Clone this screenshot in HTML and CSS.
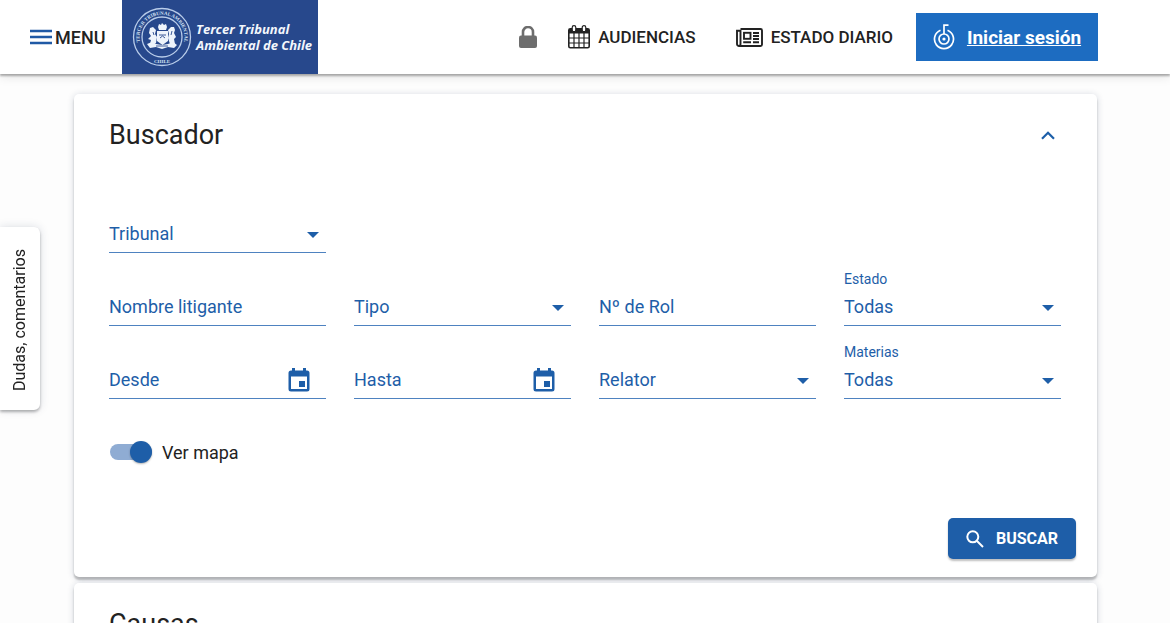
FILE: index.html
```html
<!DOCTYPE html>
<html lang="es">
<head>
<meta charset="utf-8">
<meta name="viewport" content="width=device-width, initial-scale=1">
<title>Tercer Tribunal Ambiental de Chile</title>
<link rel="stylesheet" href="styles.css">
</head>
<body>
<header class="topbar">
  <button class="menu" type="button">
    <svg width="22" height="16" viewBox="0 0 22 16" aria-hidden="true"><path d="M0 2h22M0 8h22M0 14h22" stroke="#2059a5" stroke-width="2.4"/></svg>
    MENU
  </button>
  <a class="brand" href="#">
    <svg class="seal" width="60" height="60" viewBox="0 0 60 60" aria-hidden="true">
      <defs>
        <path id="arcTop" d="M8 35A22.5 22.5 0 1 1 52 35"/>
      </defs>
      <g fill="none" stroke="#b9cdea">
        <circle cx="30" cy="30" r="28.5" stroke-width="1.3"/>
        <circle cx="30" cy="30" r="20" stroke-width="1.3"/>
      </g>
      <text class="seal-text"><textPath href="#arcTop" startOffset="50%" text-anchor="middle">TERCER TRIBUNAL AMBIENTAL</textPath></text>
      <text class="seal-text" x="30" y="56" text-anchor="middle">CHILE</text>
      <g fill="#eef4fb">
        <path d="M26 20l1-3 2 1 1-2 2 2 2-1 1 3-1 3h-7z"/>
        <path d="M25 24h11v10l-5.500 4-5.500-4z"/>
        <path d="M18 21l3-1 3 3-1 4 2 3-1 6-3 2-3-1 1-4-3-1 3-3-2-3z"/>
        <path d="M42 20l-3 0-3 3 1 4-1 4 2 6h5l-1-5 2-2-2-4 1-3z"/>
        <path d="M15 37l5-2 4 2 6 1 6-1 5-2 4 3-3 3-6-1-6 2-6-2-6 1z"/>
      </g>
      <path d="M27 28h7M28 31l2.500-2 2.500 2M21 25l1 3M40 24l-1 4M24 39l12 0" stroke="#27488c" stroke-width=".9" fill="none"/>
    </svg>
    <span class="brand-name">Tercer Tribunal<br>Ambiental de Chile</span>
  </a>
  <nav class="nav">
    <svg class="lock" width="18" height="22" viewBox="0 0 18 22" role="img" aria-label="Bloqueado"><path d="M4 10V6a5 5 0 0 1 10 0v4" fill="none" stroke="#6d6d6d" stroke-width="2.600"/><rect y="9.500" width="18" height="12.500" rx="2" fill="#6d6d6d"/></svg>
    <a class="nav-link" href="#">
      <svg width="22" height="24" viewBox="0 0 22 24" aria-hidden="true">
        <rect x=".8" y="3.800" width="20.400" height="19" rx="1.500" fill="#fff" stroke="#222" stroke-width="1.600"/>
        <path d="M1 4h20v4.500H1z" fill="#222"/>
        <path d="M1 13h20M1 18h20M6 8v15M11 8v15M16 8v15" stroke="#222" stroke-width="1.200"/>
        <rect x="4.200" y=".7" width="3.600" height="6" rx="1.800" fill="#fff" stroke="#222" stroke-width="1.200"/>
        <rect x="14.200" y=".7" width="3.600" height="6" rx="1.800" fill="#fff" stroke="#222" stroke-width="1.200"/>
      </svg>
      AUDIENCIAS
    </a>
    <a class="nav-link" href="#">
      <svg width="27" height="19" viewBox="0 0 27 19" aria-hidden="true">
        <g fill="none" stroke="#222" stroke-width="1.900">
          <path d="M4.500 1H24.500a1.500 1.500 0 0 1 1.500 1.500V16.500a1.500 1.500 0 0 1-1.500 1.500H3a2 2 0 0 1-2-2V2.800H4.500V16a1.800 1.800 0 0 1-1.800 1.900"/>
          <rect x="8" y="4.800" width="6.500" height="6"/>
          <path d="M17 5h6M17 8h6M17 11h6M7.200 14.200h7.800M17 14.200h6"/>
        </g>
      </svg>
      ESTADO DIARIO
    </a>
    <a class="login" href="#">
      <svg width="22" height="26" viewBox="0 0 22 26" aria-hidden="true">
        <g fill="none" stroke="#fff" stroke-width="1.700">
          <path d="M7.500 6.300A9.500 9.500 0 1 0 14.500 6.300"/>
          <circle cx="11" cy="15" r="5"/>
          <path d="M11 10V1.200H15.500"/>
        </g>
        <circle cx="11" cy="15" r="1.600" fill="#fff"/>
      </svg>
      <span>Iniciar sesión</span>
    </a>
  </nav>
</header>

<button class="feedback" type="button">Dudas, comentarios</button>

<main class="content">
  <section class="card">
    <div class="card-head">
      <h2>Buscador</h2>
      <button class="collapse" type="button" aria-label="Contraer">
        <svg width="14" height="9" viewBox="0 0 14 9"><path d="M1 7.700L7 1.700l6 6" fill="none" stroke="#1d5fa9" stroke-width="2.200"/></svg>
      </button>
    </div>
    <form class="search">
      <div class="fields">
        <div class="field first">
          <label for="tribunal">Tribunal</label>
          <select id="tribunal"><option></option></select>
          <svg class="arrow" viewBox="0 0 12 6"><path d="M0 0h12L6 6z"/></svg>
        </div>
        <div class="field">
          <label for="litigante">Nombre litigante</label>
          <input id="litigante" type="text">
        </div>
        <div class="field">
          <label for="tipo">Tipo</label>
          <select id="tipo"><option></option></select>
          <svg class="arrow" viewBox="0 0 12 6"><path d="M0 0h12L6 6z"/></svg>
        </div>
        <div class="field">
          <label for="rol">Nº de Rol</label>
          <input id="rol" type="text">
        </div>
        <div class="field filled">
          <label for="estado">Estado</label>
          <select id="estado"><option>Todas</option></select>
          <svg class="arrow" viewBox="0 0 12 6"><path d="M0 0h12L6 6z"/></svg>
        </div>
        <div class="field">
          <label for="desde">Desde</label>
          <input id="desde" type="text">
          <button class="date" type="button" aria-label="Elegir fecha desde">
            <svg width="22" height="24" viewBox="0 0 22 24"><path d="M19 2.500h-1V0h-3v2.500H7V0H4v2.500H3A2.500 2.500 0 0 0 .5 5v16A2.500 2.500 0 0 0 3 23.500h16a2.500 2.500 0 0 0 2.500-2.500V5A2.500 2.500 0 0 0 19 2.500zM19 21H3V8.500h16zM11 13h6v6h-6z" fill-rule="evenodd"/></svg>
          </button>
        </div>
        <div class="field">
          <label for="hasta">Hasta</label>
          <input id="hasta" type="text">
          <button class="date" type="button" aria-label="Elegir fecha hasta">
            <svg width="22" height="24" viewBox="0 0 22 24"><path d="M19 2.500h-1V0h-3v2.500H7V0H4v2.500H3A2.500 2.500 0 0 0 .5 5v16A2.500 2.500 0 0 0 3 23.500h16a2.500 2.500 0 0 0 2.500-2.500V5A2.500 2.500 0 0 0 19 2.500zM19 21H3V8.500h16zM11 13h6v6h-6z" fill-rule="evenodd"/></svg>
          </button>
        </div>
        <div class="field">
          <label for="relator">Relator</label>
          <select id="relator"><option></option></select>
          <svg class="arrow" viewBox="0 0 12 6"><path d="M0 0h12L6 6z"/></svg>
        </div>
        <div class="field filled">
          <label for="materias">Materias</label>
          <select id="materias"><option>Todas</option></select>
          <svg class="arrow" viewBox="0 0 12 6"><path d="M0 0h12L6 6z"/></svg>
        </div>
      </div>
      <div class="switch">
        <input id="mapa" type="checkbox" checked>
        <label for="mapa">Ver mapa</label>
      </div>
      <div class="actions">
        <button class="submit" type="button">
          <svg width="18" height="18" viewBox="0 0 18 18" aria-hidden="true"><g fill="none" stroke="#fff" stroke-width="2"><circle cx="6.800" cy="6.800" r="5.500"/><path d="M11 11l6 6"/></g></svg>
          BUSCAR
        </button>
      </div>
    </form>
  </section>
  <section class="card">
    <div class="card-head">
      <h2>Causas</h2>
    </div>
  </section>
</main>
</body>
</html>
```

FILE: styles.css
```css
:root {
  --blue: #1e5ea8;
  --ink: #222;
}

* {
  box-sizing: border-box;
}

body {
  margin: 0;
  background: #fdfdfd;
  color: var(--ink);
  font-family: Roboto, "Liberation Sans", sans-serif;
  font-size: 18px;
}

button {
  padding: 0;
  border: 0;
  background: none;
  color: inherit;
  font: inherit;
  cursor: pointer;
}

svg {
  display: block;
  flex: none;
}

.topbar {
  display: flex;
  align-items: center;
  height: 74px;
  padding: 0 72px 0 30px;
  background: #fff;
  box-shadow: 0 2px 2px rgba(0, 0, 0, .3), 0 3px 10px rgba(0, 0, 0, .1);
}

.menu {
  display: flex;
  align-items: center;
  gap: 3px;
  width: 92px;
  font-weight: 500;
}

.brand {
  display: flex;
  align-items: center;
  gap: 4px;
  width: 196px;
  height: 74px;
  padding-left: 10px;
  background: #27488c;
  color: #f3f7fc;
  text-decoration: none;
  white-space: nowrap;
}

.brand-name {
  font: italic 700 13px/16px "Open Sans", sans-serif;
}

.seal-text {
  fill: #d5e2f3;
  font: 700 5px "Liberation Serif", serif;
}

.nav {
  display: flex;
  align-items: center;
  margin-left: auto;
}

.lock {
  margin-right: 31px;
}

.nav-link {
  display: flex;
  align-items: center;
  gap: 8px;
  margin-right: 40px;
  color: var(--ink);
  font-size: 17px;
  font-weight: 500;
  text-decoration: none;
  white-space: nowrap;
}

.nav-link + .nav-link {
  margin-right: 23px;
}

.login {
  display: flex;
  align-items: center;
  justify-content: center;
  gap: 12px;
  width: 182px;
  height: 48px;
  background: #1d6cc1;
  color: #fff;
  font-size: 19px;
  font-weight: 700;
  white-space: nowrap;
}

.feedback {
  position: fixed;
  top: 227px;
  left: 0;
  width: 40px;
  height: 183px;
  padding-bottom: 4px;
  border-radius: 6px 0 0 6px;
  background: #fff;
  box-shadow: 0 -2px 3px rgba(0, 0, 0, .28), 0 0 10px rgba(30, 50, 90, .15);
  font-size: 16px;
  text-align: center;
  writing-mode: vertical-rl;
  transform: rotate(180deg);
}

.content {
  display: grid;
  gap: 6px;
  padding: 20px 73px 24px 74px;
}

.card {
  border-radius: 5px;
  background: #fff;
  box-shadow: 0 3px 2px rgba(0, 0, 0, .22), 0 1px 7px rgba(30, 50, 90, .2);
}

.card-head {
  display: flex;
  align-items: center;
  justify-content: space-between;
  height: 82px;
  padding: 0 42px 0 35px;
}

h2 {
  margin: 0;
  font-size: 27px;
  font-weight: 400;
}

.search {
  padding-top: 22px;
}

.fields {
  display: grid;
  grid-template-columns: repeat(4, minmax(0, 1fr));
  gap: 18px 28px;
  padding: 0 36px 0 35px;
}

.field {
  display: grid;
  grid-template-columns: 1fr;
  grid-template-rows: 16px 39px;
  color: var(--blue);
}

.field.first {
  grid-column: 1 / 2;
}

.field.first + .field {
  grid-column-start: 1;
}

.field > * {
  grid-area: 2 / 1;
}

.field label {
  align-self: center;
  line-height: 22px;
  pointer-events: none;
  z-index: 1;
}

.field.filled label {
  grid-row: 1;
  font-size: 14px;
  line-height: 16px;
}

.field input,
.field select {
  width: 100%;
  margin: 0;
  padding: 0;
  border: 0;
  border-bottom: 1px solid #4e82c0;
  border-radius: 0;
  background: transparent;
  color: inherit;
  font: inherit;
  appearance: none;
  outline: 0;
}

.arrow {
  align-self: center;
  justify-self: end;
  width: 12px;
  height: 6px;
  margin: 3px 7px 0 0;
  fill: var(--blue);
  pointer-events: none;
}

.date {
  align-self: center;
  justify-self: end;
  margin-right: 16px;
  fill: var(--blue);
}

.switch {
  display: flex;
  align-items: center;
  gap: 10px;
  height: 24px;
  margin: 41px 35px 0 36px;
}

.switch input {
  position: relative;
  width: 42px;
  height: 16px;
  margin: 0;
  border-radius: 8px;
  background: #8facd3;
  appearance: none;
}

.switch input::after {
  content: "";
  position: absolute;
  top: -3px;
  left: 0;
  width: 22px;
  height: 22px;
  border-radius: 50%;
  background: var(--blue);
  box-shadow: 0 1px 2px rgba(0, 0, 0, .3);
}

.switch input:checked::after {
  left: 20px;
}

.actions {
  display: flex;
  justify-content: flex-end;
  padding: 54px 21px 18px;
}

.submit {
  display: flex;
  align-items: center;
  justify-content: center;
  gap: 12px;
  width: 128px;
  height: 41px;
  border-radius: 5px;
  background: var(--blue);
  box-shadow: 0 2px 2px rgba(0, 0, 0, .25);
  color: #fff;
  font-size: 16px;
  font-weight: 700;
}
```
